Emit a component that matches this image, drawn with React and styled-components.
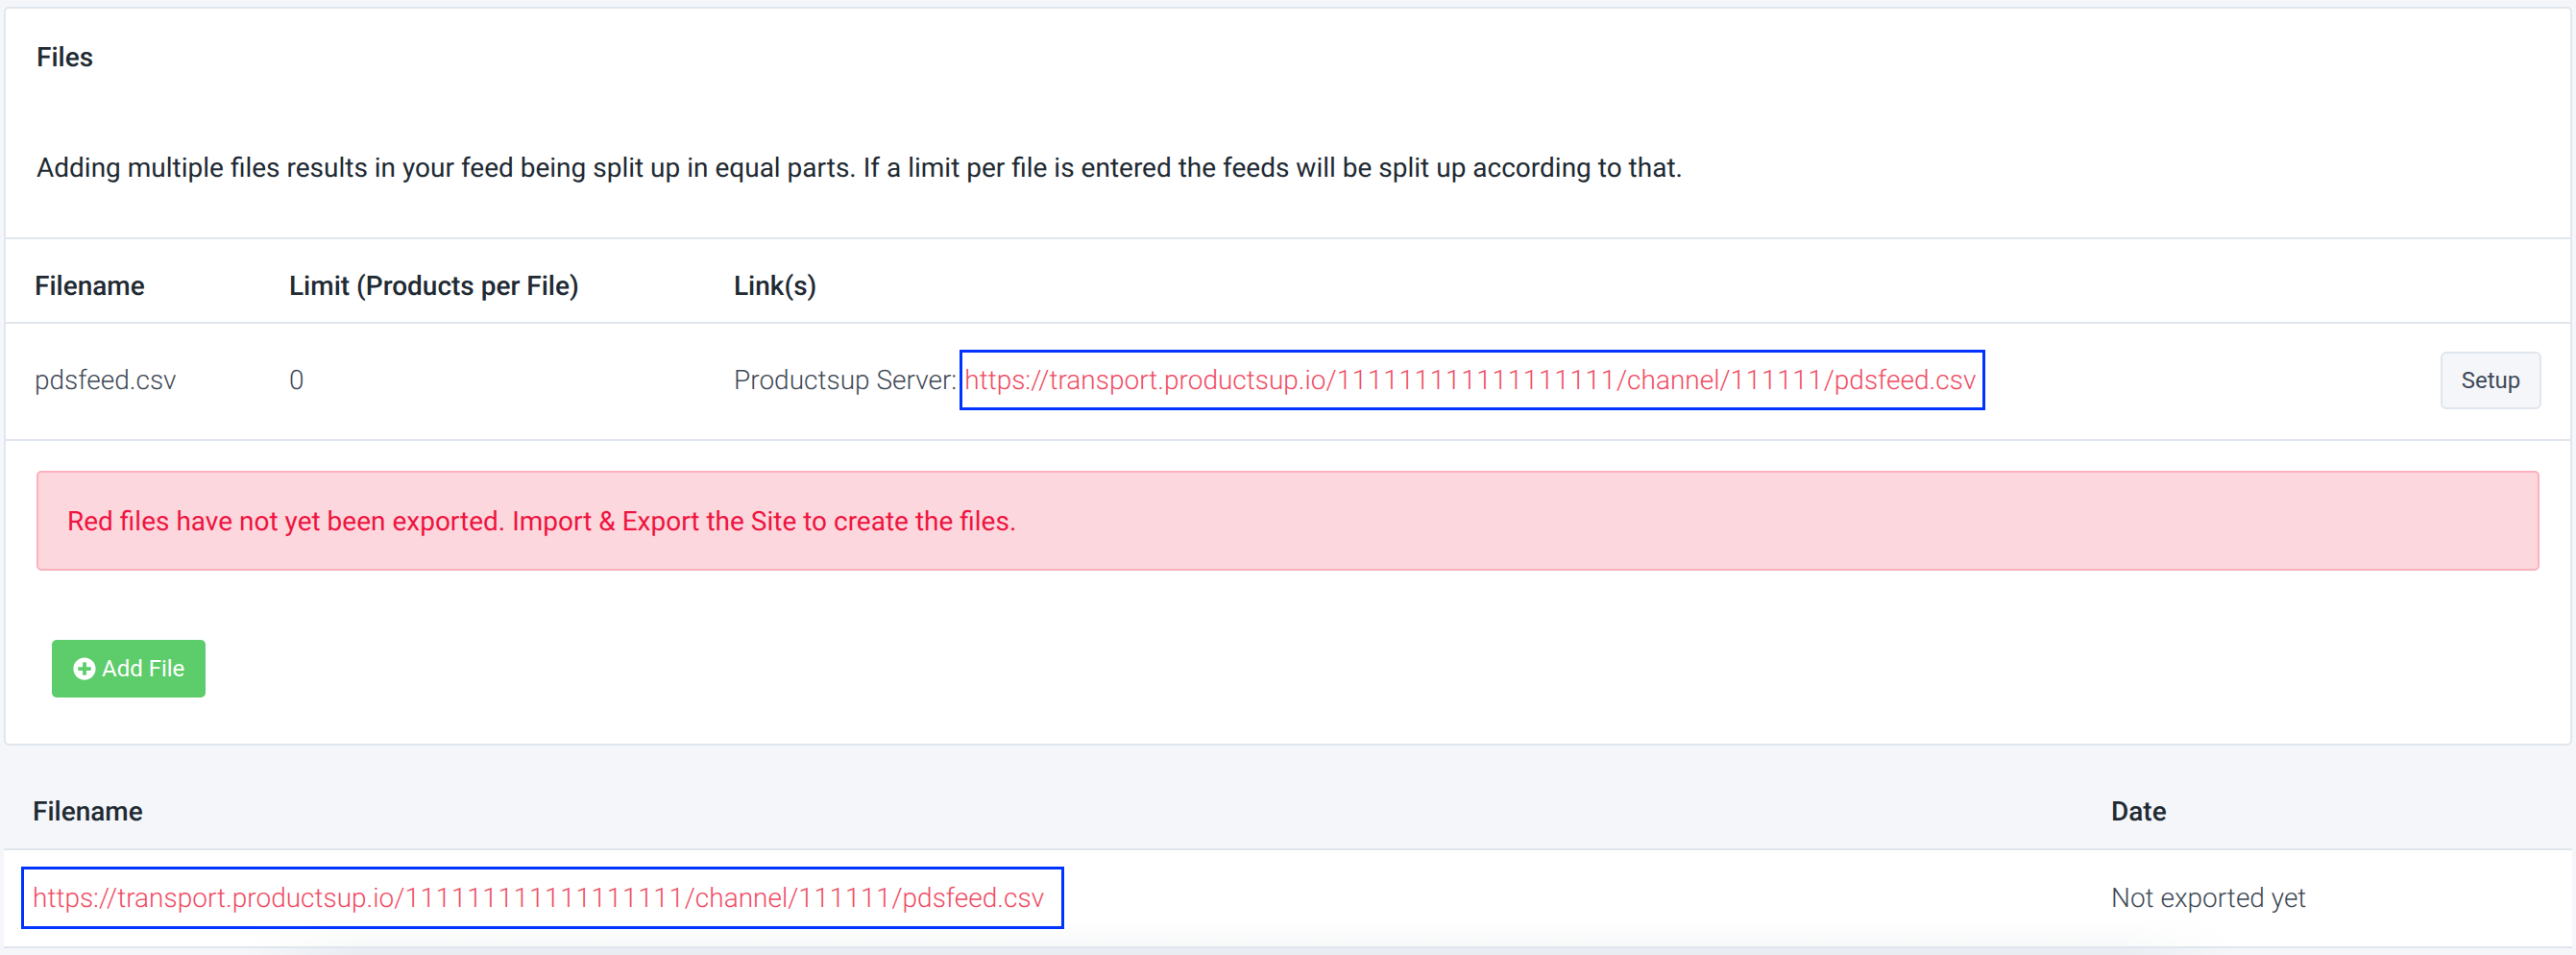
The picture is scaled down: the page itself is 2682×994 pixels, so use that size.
import styled, { createGlobalStyle } from 'styled-components'
import { FaPlusCircle } from 'react-icons/fa'

const colors = {
  page: '#f4f6fa',
  line: '#e0e6ee',
  dark: '#212a33',
  body: '#3f4a57',
  link: '#f04c64',
  annotation: '#0033ff',
}

const GlobalStyle = createGlobalStyle`
  html, body {
    margin: 0;
    padding: 0;
    background: ${colors.page};
  }
  body {
    font-family: Roboto, "Liberation Sans", sans-serif;
    color: ${colors.body};
    text-rendering: geometricPrecision;
  }
`

const ExportLink = () => (
  <FileLink href='#'>
    https://transport.productsup.io/<Digits>111111111111111111</Digits>/channel/<Digits>111111</Digits>/pdsfeed.csv
  </FileLink>
)

const App = () => (
  <Page>
    <GlobalStyle />
    <Card>
      <CardHead>
        <CardTitle>Files</CardTitle>
        <Intro>
          Adding multiple files results in your feed being split up in equal parts. If a limit per
          file is entered the feeds will be split up according to that.
        </Intro>
      </CardHead>
      <FilesHeader>
        <HeadCell>Filename</HeadCell>
        <HeadCell>Limit (Products per File)</HeadCell>
        <HeadCell>Link(s)</HeadCell>
      </FilesHeader>
      <FilesRow>
        <BodyCell>pdsfeed.csv</BodyCell>
        <BodyCell>0</BodyCell>
        <BodyCell>
          Productsup Server:
          <Highlight $left='2px' $right='7px' $height='63px'>
            <ExportLink />
          </Highlight>
        </BodyCell>
        <SetupButton>Setup</SetupButton>
      </FilesRow>
      <Alert>Red files have not yet been exported. Import &amp; Export the Site to create the files.</Alert>
      <AddFile>
        <FaPlusCircle size={24} />
        Add File
      </AddFile>
    </Card>
    <ExportHeader>
      <HeadCell>Filename</HeadCell>
      <HeadCell>Date</HeadCell>
    </ExportHeader>
    <ExportRow>
      <BodyCell>
        <Highlight $left='9px' $right='18px' $height='65px'>
          <ExportLink />
        </Highlight>
      </BodyCell>
      <BodyCell>Not exported yet</BodyCell>
    </ExportRow>
    <BottomFade />
  </Page>
)

const Page = styled.div`
  width: 2682px;
  height: 994px;
  padding: 7px 4px 0;
  box-sizing: border-box;
  overflow: hidden;
  background: ${colors.page};
`

const Card = styled.section`
  box-sizing: border-box;
  height: 769px;
  background: #fff;
  border: 2px solid ${colors.line};
  border-radius: 5px;
`

const CardHead = styled.div`
  box-sizing: border-box;
  height: 238px;
  padding: 30px 0 0 32px;
`

const CardTitle = styled.h2`
  margin: 0;
  font-size: 28px;
  line-height: 42px;
  font-weight: 500;
  color: ${colors.dark};
`

const Intro = styled.p`
  margin: 73px 0 0;
  font-size: 28px;
  line-height: 42px;
  font-weight: 400;
  color: ${colors.dark};
`

const filesColumns = `
  display: grid;
  grid-template-columns: 265px 463px 1fr auto;
  align-items: center;
  box-sizing: border-box;
  padding: 0 30px 0 30px;
  border-top: 2px solid ${colors.line};
`

const FilesHeader = styled.div`
  ${filesColumns}
  height: 88px;
  padding-top: 10px;
`

const FilesRow = styled.div`
  ${filesColumns}
  height: 124px;
  padding-bottom: 3px;
  border-bottom: 2px solid ${colors.line};
`

const HeadCell = styled.div`
  font-size: 28px;
  font-weight: 500;
  color: ${colors.dark};
`

const BodyCell = styled.div`
  display: flex;
  align-items: center;
  gap: 3px;
  font-size: 28px;
  font-weight: 300;
  color: ${colors.body};
`

const Highlight = styled.span`
  display: inline-flex;
  align-items: center;
  box-sizing: border-box;
  height: ${(p) => p.$height};
  padding: 0 ${(p) => p.$right} 0 ${(p) => p.$left};
  border: 3px solid ${colors.annotation};
`

const FileLink = styled.a`
  font-size: 28px;
  font-weight: 300;
  color: ${colors.link};
  text-decoration: none;
`

const Digits = styled.span`
  letter-spacing: 0.65px;
`

const SetupButton = styled.button`
  box-sizing: border-box;
  width: 105px;
  height: 60px;
  padding: 0;
  font-family: inherit;
  font-size: 24px;
  font-weight: 400;
  color: ${colors.body};
  background: ${colors.page};
  border: 2px solid ${colors.line};
  border-radius: 6px;
`

const Alert = styled.div`
  display: flex;
  align-items: center;
  box-sizing: border-box;
  height: 104px;
  margin: 31px 32px 0 32px;
  padding: 0 30px;
  font-size: 28px;
  color: #f01440;
  background: #fcd8de;
  border: 2px solid #fbb1bc;
  border-radius: 5px;
`

const AddFile = styled.button`
  display: flex;
  align-items: center;
  gap: 6px;
  box-sizing: border-box;
  width: 160px;
  height: 60px;
  margin: 72px 0 0 48px;
  padding: 0 0 0 22px;
  font-family: inherit;
  font-size: 24px;
  color: #fff;
  background: #5dcc6a;
  border: none;
  border-radius: 5px;
`

const ExportHeader = styled.div`
  display: grid;
  grid-template-columns: 2164px 1fr;
  align-items: center;
  box-sizing: border-box;
  height: 109px;
  padding: 30px 0 0 30px;
  border-bottom: 2px solid ${colors.line};
`

const ExportRow = styled.div`
  display: grid;
  grid-template-columns: 2176px 1fr;
  align-items: center;
  box-sizing: border-box;
  height: 102px;
  padding: 0 0 2px 18px;
  background:
    linear-gradient(to right, #fff 250px, transparent 370px, transparent 2200px, #fff 2320px),
    linear-gradient(to bottom, #fff 70%, #f8f9fa 100%);
  border-bottom: 2px solid ${colors.line};
`

const BottomFade = styled.div`
  height: 9px;
  background:
    linear-gradient(to right, ${colors.page} 250px, transparent 370px, transparent 2200px, ${colors.page} 2320px),
    #e9ecf0;
`

export default App
